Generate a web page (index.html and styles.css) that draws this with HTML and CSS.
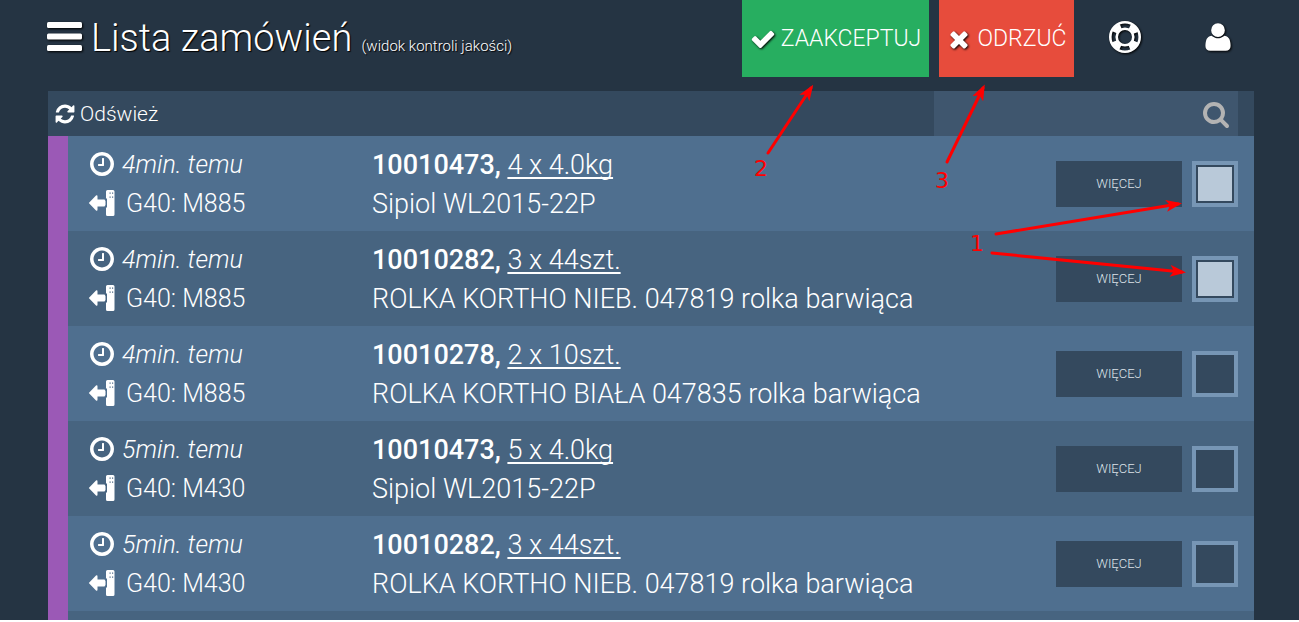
FILE: index.html
```html
<!DOCTYPE html>
<html lang="pl">
<head>
<meta charset="utf-8">
<title>Lista zamówień</title>
<link rel="stylesheet" href="styles.css">
</head>
<body>
<svg class="sprite" aria-hidden="true">
  <symbol id="bars" viewBox="0 0 35 30"><rect y="0" width="35" height="6" rx="1.5"/><rect y="11.5" width="35" height="6" rx="1.5"/><rect y="23" width="35" height="6" rx="1.5"/></symbol>
  <symbol id="check" viewBox="0 0 1792 1792"><path d="M1671 566q0 40-28 68l-724 724-136 136q-28 28-68 28t-68-28l-136-136-362-362q-28-28-28-68t28-68l136-136q28-28 68-28t68 28l294 295 656-657q28-28 68-28t68 28l136 136q28 28 28 68z"/></symbol>
  <symbol id="times" viewBox="0 0 1792 1792"><path d="M1490 1322q0 40-28 68l-136 136q-28 28-68 28t-68-28l-294-294-294 294q-28 28-68 28t-68-28l-136-136q-28-28-28-68t28-68l294-294-294-294q-28-28-28-68t28-68l136-136q28-28 68-28t68 28l294 294 294-294q28-28 68-28t68 28l136 136q28 28 28 68t-28 68l-294 294 294 294q28 28 28 68z"/></symbol>
  <symbol id="ring" viewBox="0 0 32 32"><g fill="none" stroke="currentColor"><circle cx="16" cy="16" r="14.7" stroke-width="2.6"/><circle cx="16" cy="16" r="8.3" stroke-width="2.6"/><circle cx="16" cy="16" r="11.5" stroke-width="5" stroke-dasharray="8.66 9.4" stroke-dashoffset="-4.7"/></g></symbol>
  <symbol id="user" viewBox="0 0 1792 1792"><path d="M1600 1405q0 120-73 189.500t-194 69.500h-874q-121 0-194-69.500t-73-189.500q0-53 3.500-103.500t14-109 26.500-108.500 43-97.500 62-81 85.500-53.500 111.500-20q9 0 42 21.500t74.500 48 108 48 133.500 21.500 133.500-21.500 108-48 74.500-48 42-21.500q61 0 111.500 20t85.500 53.500 62 81 43 97.500 26.500 108.500 14 109 3.500 103.500zm-320-893q0 159-112.500 271.500t-271.500 112.500-271.500-112.500-112.500-271.500 112.500-271.500 271.500-112.500 271.500 112.500 112.500 271.500z"/></symbol>
  <symbol id="refresh" viewBox="0 0 1792 1792"><path d="M1639 1056q0 5-1 7-64 268-268 434.500t-478 166.500q-146 0-282.500-55t-243.500-157l-129 129q-19 19-45 19t-45-19-19-45v-448q0-26 19-45t45-19h448q26 0 45 19t19 45-19 45l-137 137q71 66 161 102t187 36q134 0 250-65t186-179q11-17 53-117 8-23 30-23h192q13 0 22.500 9.500t9.500 22.500zm25-800v448q0 26-19 45t-45 19h-448q-26 0-45-19t-19-45 19-45l138-138q-148-137-349-137-134 0-250 65t-186 179q-11 17-53 117-8 23-30 23h-199q-13 0-22.500-9.500t-9.500-22.500v-7q65-268 270-434.500t480-166.500q146 0 284 55.500t245 156.500l130-129q19-19 45-19t45 19 19 45z"/></symbol>
  <symbol id="search" viewBox="0 0 1792 1792"><path d="M1216 832q0-185-131.500-316.500t-316.500-131.500-316.500 131.500-131.500 316.500 131.500 316.500 316.500 131.500 316.500-131.500 131.500-316.500zm512 832q0 52-38 90t-90 38q-54 0-90-38l-343-342q-179 124-399 124-143 0-273.500-55.500t-225-150-150-225-55.500-273.500 55.500-273.500 150-225 225-150 273.500-55.500 273.500 55.500 225 150 150 225 55.500 273.500q0 220-124 399l343 343q37 37 37 90z"/></symbol>
  <symbol id="clock" viewBox="0 0 1792 1792"><path d="M1024 544v448q0 14-9 23t-23 9h-320q-14 0-23-9t-9-23v-64q0-14 9-23t23-9h224v-352q0-14 9-23t23-9h64q14 0 23 9t9 23zm416 352q0-148-73-273t-198-198-273-73-273 73-198 198-73 273 73 273 198 198 273 73 273-73 198-198 73-273zm224 0q0 209-103 385.500t-279.500 279.500-385.500 103-385.500-103-279.500-279.500-103-385.500 103-385.500 279.500-279.500 385.500-103 385.500 103 279.500 279.500 103 385.500z"/></symbol>
  <symbol id="gate" viewBox="0 0 28 28"><path fill-rule="evenodd" d="M.8 14 8 6.500Q9.500 5.500 9.500 7.500V10.500H16.500L17.500 12V16L16.500 17.500H9.500V20.500Q9.500 22.500 8 21.500ZM18 2.500Q18 1 19.500 1H25Q26.500 1 26.500 2.500V25.500Q26.500 27 25 27H19.500Q18 27 18 25.500V19L19 18V10L18 9ZM21.500 3.500V4.700H22.700V3.500ZM24 3.500V4.700H25.200V3.500ZM21.500 7.500V8.700H22.700V7.500ZM24 7.500V8.700H25.200V7.500Z"/></symbol>
</svg>

<header class="top">
  <button class="menu" aria-label="Menu"><svg><use href="#bars"/></svg></button>
  <h1 class="title">Lista zamówień <small>(widok kontroli jakości)</small></h1>
  <button class="action accept"><svg><use href="#check"/></svg>ZAAKCEPTUJ</button>
  <button class="action reject"><svg><use href="#times"/></svg>ODRZUĆ</button>
  <nav class="tools">
    <button aria-label="Pomoc"><svg><use href="#ring"/></svg></button>
    <button aria-label="Konto"><svg><use href="#user"/></svg></button>
  </nav>
</header>

<main class="panel">
  <div class="toolbar">
    <button class="refresh"><svg><use href="#refresh"/></svg>Odśwież</button>
    <form class="search"><input type="search" aria-label="Szukaj"><button type="button" aria-label="Szukaj"><svg><use href="#search"/></svg></button></form>
  </div>
  <ul class="orders">
    <li class="order">
      <div class="meta"><em><svg><use href="#clock"/></svg>4min. temu</em><span><svg><use href="#gate"/></svg>G40: M885</span></div>
      <div class="product"><p><b>10010473,</b> <u>4 x 4.0kg</u></p><p>Sipiol WL2015-22P</p></div>
      <button class="more">WIĘCEJ</button><input type="checkbox" aria-label="Zaznacz zamówienie" checked>
    </li>
    <li class="order">
      <div class="meta"><em><svg><use href="#clock"/></svg>4min. temu</em><span><svg><use href="#gate"/></svg>G40: M885</span></div>
      <div class="product"><p><b>10010282,</b> <u>3 x 44szt.</u></p><p>ROLKA KORTHO NIEB. 047819 rolka barwiąca</p></div>
      <button class="more">WIĘCEJ</button><input type="checkbox" aria-label="Zaznacz zamówienie" checked>
    </li>
    <li class="order">
      <div class="meta"><em><svg><use href="#clock"/></svg>4min. temu</em><span><svg><use href="#gate"/></svg>G40: M885</span></div>
      <div class="product"><p><b>10010278,</b> <u>2 x 10szt.</u></p><p>ROLKA KORTHO BIAŁA 047835 rolka barwiąca</p></div>
      <button class="more">WIĘCEJ</button><input type="checkbox" aria-label="Zaznacz zamówienie">
    </li>
    <li class="order">
      <div class="meta"><em><svg><use href="#clock"/></svg>5min. temu</em><span><svg><use href="#gate"/></svg>G40: M430</span></div>
      <div class="product"><p><b>10010473,</b> <u>5 x 4.0kg</u></p><p>Sipiol WL2015-22P</p></div>
      <button class="more">WIĘCEJ</button><input type="checkbox" aria-label="Zaznacz zamówienie">
    </li>
    <li class="order">
      <div class="meta"><em><svg><use href="#clock"/></svg>5min. temu</em><span><svg><use href="#gate"/></svg>G40: M430</span></div>
      <div class="product"><p><b>10010282,</b> <u>3 x 44szt.</u></p><p>ROLKA KORTHO NIEB. 047819 rolka barwiąca</p></div>
      <button class="more">WIĘCEJ</button><input type="checkbox" aria-label="Zaznacz zamówienie">
    </li>
    <li class="order"></li>
  </ul>
</main>

<svg class="notes" viewBox="0 0 1299 622">
  <defs><marker id="tip" viewBox="0 0 16 12" refX="12" refY="6" markerWidth="16" markerHeight="12" markerUnits="userSpaceOnUse" orient="auto"><path d="M16 6 0 0 4 6 0 12Z" fill="#f00"/></marker></defs>
  <g class="arrows">
    <path d="M768 153 811 88"/><path d="M947 162 983 88"/><path d="M996 234 1178 204"/><path d="M992 253 1182 272"/>
  </g>
  <text x="754" y="176">2</text><text x="935" y="188">3</text><text x="970" y="251">1</text>
</svg>
</body>
</html>
```
FILE: styles.css
```css
* { box-sizing: border-box; }
html { background: #fff; }
body {
  position: relative;
  height: calc(100vh - 2px);
  margin: 0;
  overflow: hidden;
  display: flex;
  flex-direction: column;
  background: #253443;
  color: #fff;
  font-family: Roboto, "Open Sans", sans-serif;
  font-weight: 300;
}
button {
  margin: 0;
  padding: 0;
  border: 0;
  background: none;
  color: inherit;
  font: inherit;
  cursor: pointer;
}
svg { fill: currentColor; flex: none; }
.sprite { position: absolute; width: 0; height: 0; }

.top {
  display: flex;
  align-items: flex-start;
  height: 91px;
  padding: 0 65px 0 47px;
  text-shadow: 1px 1px 1px #000;
}
.top svg { filter: drop-shadow(1px 1px 1px #000); }
.menu { padding-top: 22px; }
.menu svg { display: block; width: 35px; height: 30px; }
.title {
  flex: 1;
  margin: 0 0 0 9px;
  font-size: 38px;
  font-weight: 300;
  line-height: 76px;
  white-space: nowrap;
}
.title small { font-size: 15px; }
.action {
  display: flex;
  align-items: center;
  justify-content: center;
  gap: 5px;
  width: 187px;
  height: 77px;
  margin-right: 10px;
  font-size: 23px;
}
.action svg { width: 26px; height: 26px; }
.accept { background: #27ae60; }
.reject { width: 135px; background: #e74c3c; }
.tools { display: flex; gap: 61px; padding: 21px 0 0 25px; }
.tools svg { display: block; width: 32px; height: 32px; }

.panel { flex: 1; margin: 0 45px 0 48px; overflow: hidden; }
.toolbar {
  display: flex;
  justify-content: space-between;
  height: 45px;
  padding: 0 16px 0 6px;
  background: #34495e;
}
.refresh { display: flex; align-items: center; gap: 4px; font-size: 21px; }
.refresh svg { width: 22px; height: 22px; }
.search { display: flex; align-items: center; width: 304px; padding-right: 8px; background: #3f566e; }
.search input { flex: 1; min-width: 0; height: 45px; padding: 0 12px; border: 0; outline: 0; background: none; color: #fff; font: inherit; font-size: 21px; }
.search svg { display: block; width: 28px; height: 28px; color: #b3b3b3; }

.orders { margin: 0; padding: 0; list-style: none; border-left: 20px solid #9b59b6; }
.order {
  display: flex;
  align-items: center;
  gap: 10px;
  height: 95px;
  padding: 0 16px 0 20px;
  background: #4f6f8f;
}
.order:nth-child(even) { background: #476480; }
.meta { width: 274px; font-size: 25px; line-height: 39px; }
.meta em, .meta span { display: flex; align-items: center; gap: 6px; }
.meta span { gap: 10px; }
.meta svg { width: 28px; height: 28px; }
.product { flex: 1; min-width: 0; padding-top: 2px; font-size: 27px; line-height: 39px; white-space: nowrap; }
.product p { margin: 0; }
.product b { font-weight: 500; }
.product u { text-decoration-thickness: 2px; text-underline-offset: 3px; text-decoration-skip-ink: none; }
.more { width: 126px; height: 46px; background: #34495e; color: #dde3e9; font-size: 13px; }
.order input {
  appearance: none;
  width: 46px;
  height: 46px;
  margin: 0;
  border: 4px solid #7796b5;
  background: #34495e;
}
.order input:checked { box-shadow: inset 0 0 0 2px #34495e; background: #b9c9d9; }

.notes { position: absolute; top: 0; left: 0; width: 1299px; height: 622px; pointer-events: none; }
.arrows { fill: none; stroke: #f00; stroke-width: 3; stroke-linecap: round; }
.arrows path { marker-end: url(#tip); }
.notes text { fill: #f00; font: 400 22px "DejaVu Sans", sans-serif; }
```
